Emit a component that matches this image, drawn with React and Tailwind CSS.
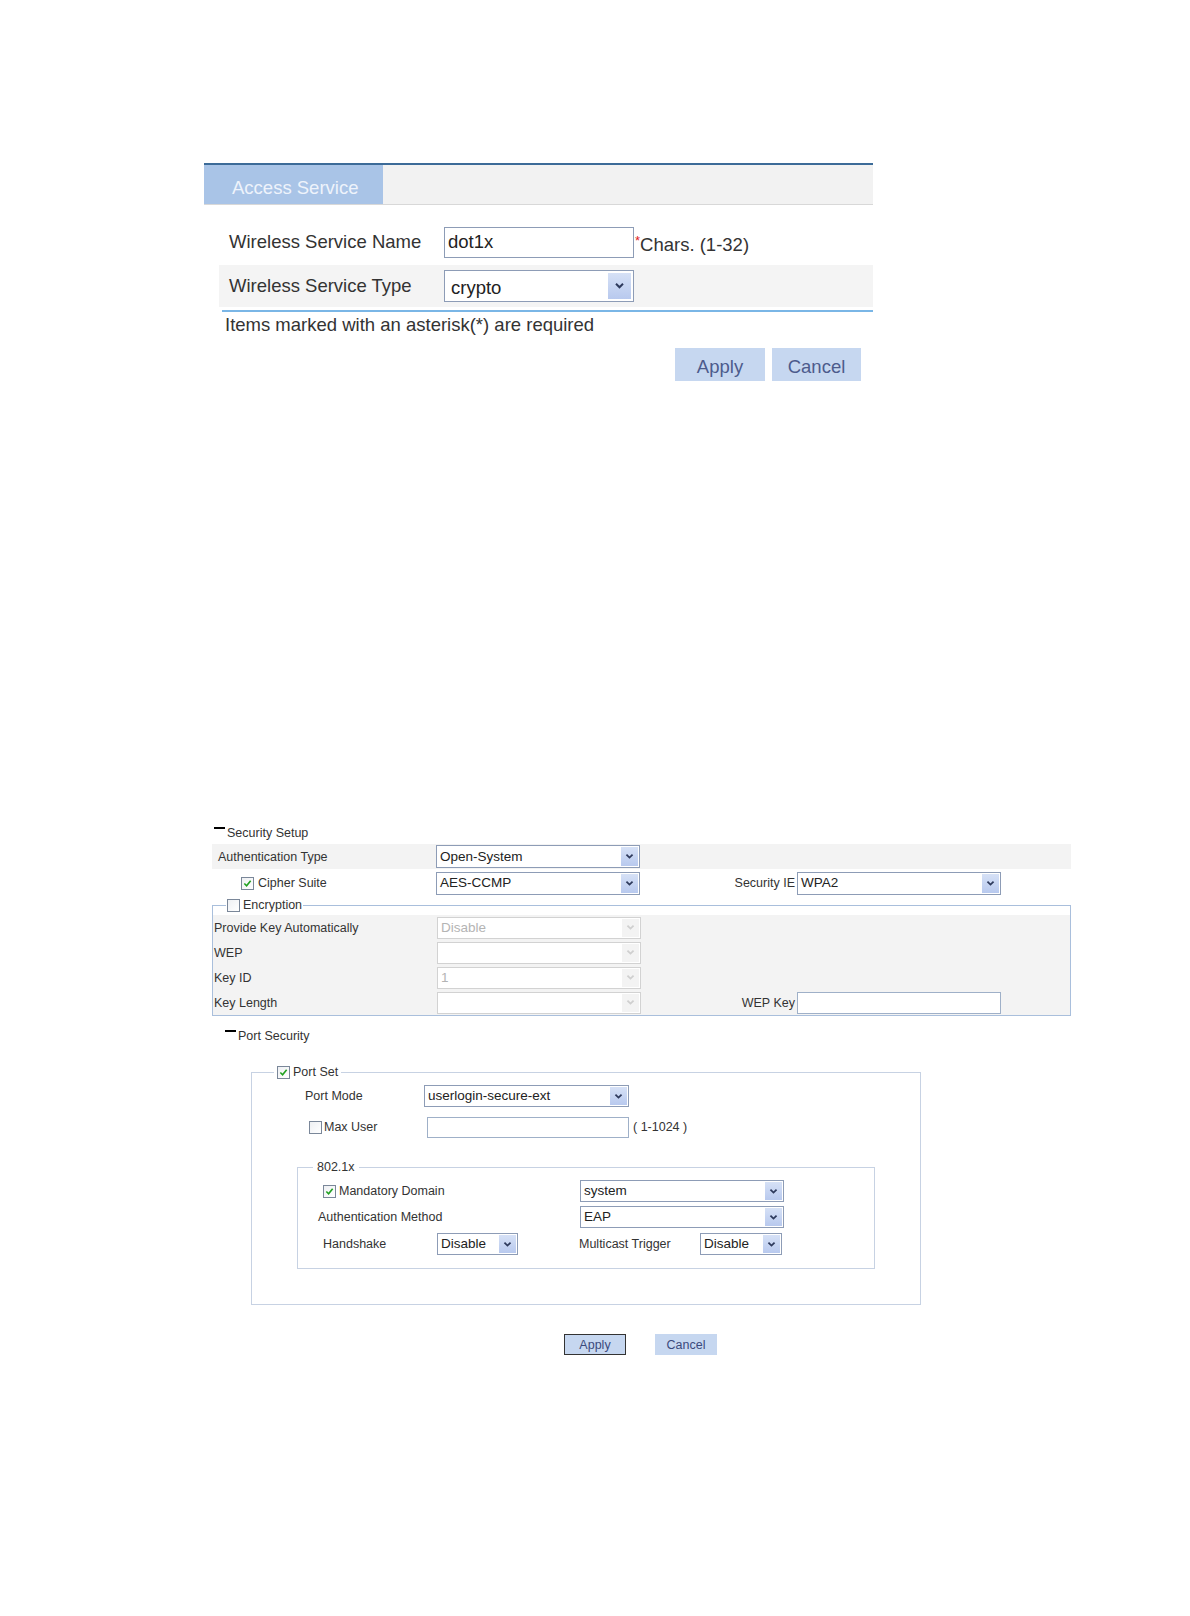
import React from "react";

const Chevron = ({ color = "#2e3a5c", big = false }) => (
  <svg
    viewBox="0 0 10 8"
    className={big ? "w-[11px] h-[8px]" : "w-[9px] h-[7px]"}
  >
    <path d="M1.5 1.8 L5 5.3 L8.5 1.8" fill="none" stroke={color} strokeWidth="2" />
  </svg>
);

const Select = ({ value, className = "", disabled = false, big = false }) => (
  <div
    className={`flex items-center bg-white border ${
      disabled ? "border-[#d2d2d2] text-[#b4b4b4]" : "border-[#8d9cb6] text-[#222]"
    } ${className}`}
  >
    <span className={`flex-1 truncate ${big ? "pl-[6px] pt-[3px]" : "pl-[3px]"}`}>{value}</span>
    <span
      className={`flex items-center justify-center self-stretch ${
        big ? "w-[23px] m-[2px]" : "w-[17px] m-[1px]"
      } ${disabled ? "bg-[#f3f3f3]" : "bg-gradient-to-b from-[#d6e1f6] to-[#b8c9ee]"}`}
    >
      <Chevron big={big} color={disabled ? "#cfcfcf" : "#2e3a5c"} />
    </span>
  </div>
);

const Check = ({ checked }) => (
  <span className="inline-flex w-[13px] h-[13px] border border-[#7a8799] bg-gradient-to-br from-[#eef0f3] to-white items-center justify-center">
    {checked ? (
      <svg viewBox="0 0 10 10" className="w-[9px] h-[9px]">
        <path d="M1.5 5 L4 7.5 L8.5 2" fill="none" stroke="#21a121" strokeWidth="1.8" />
      </svg>
    ) : null}
  </span>
);

const Dash = () => <span className="inline-block w-[11px] h-[2px] bg-black mr-[2px] mb-[3px]" />;

const TopSection = () => (
  <div className="h-[800px] pt-[163px] pl-[204px] text-[18.5px] text-[#333]">
    <div className="w-[669px]">
      {/* header strip */}
      <div className="flex h-[42px] border-t-2 border-[#3c6b98] border-b border-b-[#d8d8d8] bg-[#f2f2f2]">
        <div className="w-[179px] bg-[#a9c4e7] text-[#eef3fb] pl-[28px] pt-[9px]">Access Service</div>
      </div>

      <div className="ml-[15px] mt-[17px]">
        <div className="flex items-center h-[40px]">
          <div className="w-[225px] pl-[10px]">Wireless Service Name</div>
          <input
            readOnly
            value="dot1x"
            className="w-[190px] h-[31px] border border-[#8d9cb6] bg-white px-[3px] text-[18.5px] text-[#222] outline-none"
          />
          <span className="ml-[1px] pt-[6px]">
            <span className="text-[#e02020] text-[13px] align-top">*</span>Chars. (1-32)
          </span>
        </div>

        <div className="flex items-center h-[42px] mt-[3px] bg-[#f4f4f4]">
          <div className="w-[225px] pl-[10px]">Wireless Service Type</div>
          <Select value="crypto" big className="w-[190px] h-[32px]" />
        </div>

        <div className="ml-[3px] mt-[3px] h-[2px] bg-[#7ab6e6]" />
        <div className="ml-[6px] mt-[2px] leading-[21px]">Items marked with an asterisk(*) are required</div>

        <div className="flex justify-end gap-[7px] mr-[12px] mt-[13px]">
          <button className="w-[90px] h-[33px] bg-[#c6d7f0] text-[#4d5b8c] text-[18.5px] pt-[4px]">Apply</button>
          <button className="w-[89px] h-[33px] bg-[#c6d7f0] text-[#4d5b8c] text-[18.5px] pt-[4px]">Cancel</button>
        </div>
      </div>
    </div>
  </div>
);

const BottomSection = () => (
  <div className="pl-[212px] text-[12.5px] text-[#333] leading-[14px]">
    <div className="w-[859px]">
      {/* Security Setup */}
      <div className="h-[44px] pt-[27px] pl-[2px] flex items-start">
        <Dash />
        <span className="-mt-[1px]">Security Setup</span>
      </div>

      <div className="flex items-center h-[25px] bg-[#f3f3f3]">
        <div className="w-[224px] pl-[6px]">Authentication Type</div>
        <Select value="Open-System" className="w-[204px] h-[23px] text-[13.5px]" />
      </div>

      <div className="flex items-center h-[24px] mt-[2px]">
        <div className="w-[224px] pl-[29px] flex items-center gap-[4px]">
          <Check checked />
          <span>Cipher Suite</span>
        </div>
        <Select value="AES-CCMP" className="w-[204px] h-[23px] text-[13.5px]" />
        <div className="flex-1 flex items-center justify-end pr-[70px]">
          <span className="mr-[2px]">Security IE</span>
          <Select value="WPA2" className="w-[204px] h-[23px] text-[13.5px]" />
        </div>
      </div>

      {/* Encryption */}
      <fieldset className="mt-[3px] border border-[#a9bfdc]">
        <legend className="ml-[13px] px-[1px] flex items-center gap-[3px]">
          <Check />
          <span>Encryption</span>
        </legend>
        <div className="mt-[3px] bg-[#f3f3f3]">
          <div className="flex items-center h-[25px]">
            <div className="w-[224px] pl-[1px]">Provide Key Automatically</div>
            <Select value="Disable" disabled className="w-[204px] h-[22px] text-[13.5px]" />
          </div>
          <div className="flex items-center h-[25px]">
            <div className="w-[224px] pl-[1px]">WEP</div>
            <Select value="" disabled className="w-[204px] h-[22px] text-[13.5px]" />
          </div>
          <div className="flex items-center h-[25px]">
            <div className="w-[224px] pl-[1px]">Key ID</div>
            <Select value="1" disabled className="w-[204px] h-[22px] text-[13.5px]" />
          </div>
          <div className="flex items-center h-[25px]">
            <div className="w-[224px] pl-[1px]">Key Length</div>
            <Select value="" disabled className="w-[204px] h-[22px] text-[13.5px]" />
            <div className="flex-1 flex items-center justify-end pr-[69px]">
              <span className="mr-[2px]">WEP Key</span>
              <div className="w-[204px] h-[22px] bg-white border border-[#9fb0c8]" />
            </div>
          </div>
        </div>
      </fieldset>

      {/* Port Security */}
      <div className="h-[49px] pt-[14px] pl-[13px] flex items-start">
        <Dash />
        <span className="-mt-[1px]">Port Security</span>
      </div>

      <fieldset className="ml-[39px] w-[670px] h-[240px] border border-[#c7d2e3]">
        <legend className="ml-[22px] px-[3px] flex items-center gap-[3px]">
          <Check checked />
          <span>Port Set</span>
        </legend>

        <div className="flex items-center h-[24px] mt-[5px]">
          <div className="w-[172px] pl-[53px]">Port Mode</div>
          <Select value="userlogin-secure-ext" className="w-[205px] h-[22px] text-[13.5px]" />
        </div>

        <div className="flex items-center h-[24px] mt-[7px]">
          <div className="w-[175px] pl-[57px] flex items-center gap-[2px]">
            <Check />
            <span>Max User</span>
          </div>
          <div className="w-[202px] h-[21px] bg-white border border-[#9fb0c8]" />
          <span className="ml-[4px]">( 1-1024 )</span>
        </div>

        <fieldset className="ml-[45px] mt-[21px] w-[578px] h-[109px] border border-[#c7d2e3]">
          <legend className="ml-[15px] px-[4px]">802.1x</legend>

          <div className="flex items-center h-[24px] mt-[5px]">
            <div className="w-[282px] pl-[25px] flex items-center gap-[3px]">
              <Check checked />
              <span>Mandatory Domain</span>
            </div>
            <Select value="system" className="w-[204px] h-[22px] text-[13.5px]" />
          </div>

          <div className="flex items-center h-[24px] mt-[2px]">
            <div className="w-[282px] pl-[20px]">Authentication Method</div>
            <Select value="EAP" className="w-[204px] h-[22px] text-[13.5px]" />
          </div>

          <div className="flex items-center h-[24px] mt-[3px]">
            <div className="w-[139px] pl-[25px]">Handshake</div>
            <Select value="Disable" className="w-[81px] h-[22px] text-[13.5px]" />
            <div className="w-[182px] pl-[61px] whitespace-nowrap">Multicast Trigger</div>
            <Select value="Disable" className="w-[82px] h-[22px] text-[13.5px]" />
          </div>
        </fieldset>
      </fieldset>

      <div className="flex mt-[29px] pl-[352px] gap-[29px]">
        <button className="w-[62px] h-[21px] bg-[#c6d7f0] border border-[#333] text-[#3b4a7d] text-[12.5px]">Apply</button>
        <button className="w-[62px] h-[21px] bg-[#c6d7f0] text-[#3b4a7d] text-[12.5px]">Cancel</button>
      </div>
    </div>
  </div>
);

export default function App() {
  return (
    <div className="w-[1190px] h-[1616px] bg-white font-['Liberation_Sans',Arial,sans-serif]">
      <TopSection />
      <BottomSection />
    </div>
  );
}
